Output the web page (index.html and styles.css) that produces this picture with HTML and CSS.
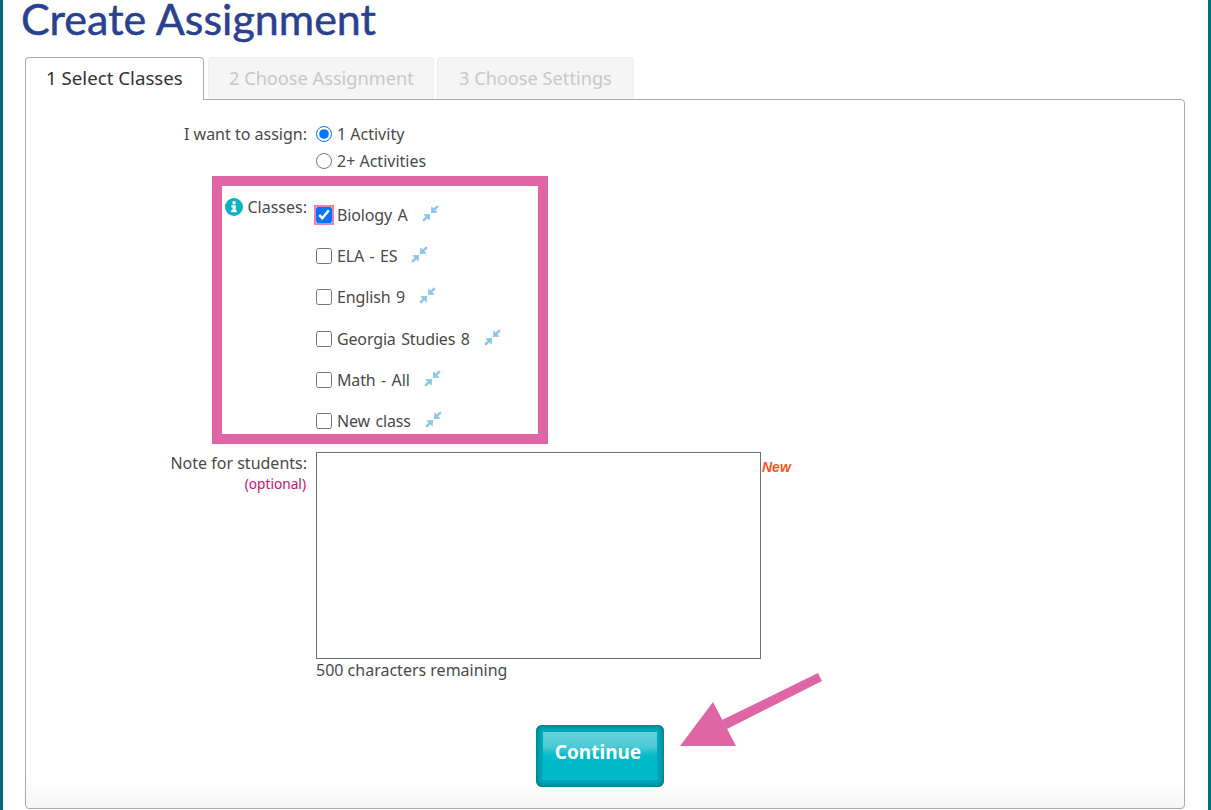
FILE: index.html
```html
<!DOCTYPE html>
<html lang="en">
<head>
    <meta charset="UTF-8">
    <meta name="viewport" content="width=device-width, initial-scale=1.0">
    <title>Create Assignment</title>
    <link rel="stylesheet" href="styles.css">
</head>
<body>
    <svg class="icon-defs" width="0" height="0" aria-hidden="true">
        <symbol id="collapse" viewBox="0 0 16 16">
            <path d="M8.4 7.6 8.8 1.2 11 3.4 14.2 0.2 15.8 1.8 12.6 5 14.8 7.2Z"/>
            <path d="M7.6 8.4 7.2 14.8 5 12.6 1.8 15.8 0.2 14.2 3.4 11 1.2 8.8Z"/>
        </symbol>
    </svg>

    <main class="page">
        <h1 class="page-title">Create Assignment</h1>

        <div class="tabs">
            <div class="tab active">1 Select Classes</div>
            <div class="tab tab-two">2 Choose Assignment</div>
            <div class="tab tab-three">3 Choose Settings</div>
        </div>

        <form class="panel">
            <div class="row row-assign">
                <div class="row-label">I want to assign:</div>
                <div class="row-field">
                    <label class="option"><input type="radio" name="assign" checked> 1 Activity</label>
                    <label class="option"><input type="radio" name="assign"> 2+ Activities</label>
                </div>
            </div>

            <div class="row row-classes">
                <div class="row-label">
                    <svg class="info-icon" viewBox="0 0 18 18" aria-hidden="true">
                        <circle cx="9" cy="9" r="9" fill="#0fb1c5"/>
                        <rect x="7.4" y="3.2" width="3.2" height="3" rx="1" fill="#fff"/>
                        <rect x="6.4" y="7.4" width="4.2" height="2" fill="#fff"/>
                        <rect x="7.6" y="7.4" width="3" height="6.4" fill="#fff"/>
                        <rect x="6.2" y="12.2" width="5.6" height="2" fill="#fff"/>
                    </svg>
                    Classes:
                </div>
                <div class="row-field class-list">
                    <label class="class-item"><input class="focused" type="checkbox" checked> Biology A <svg class="collapse-icon"><use href="#collapse"/></svg></label>
                    <label class="class-item"><input type="checkbox"> ELA - ES <svg class="collapse-icon"><use href="#collapse"/></svg></label>
                    <label class="class-item"><input type="checkbox"> English 9 <svg class="collapse-icon"><use href="#collapse"/></svg></label>
                    <label class="class-item"><input type="checkbox"> Georgia Studies 8 <svg class="collapse-icon"><use href="#collapse"/></svg></label>
                    <label class="class-item"><input type="checkbox"> Math - All <svg class="collapse-icon"><use href="#collapse"/></svg></label>
                    <label class="class-item"><input type="checkbox"> New class <svg class="collapse-icon"><use href="#collapse"/></svg></label>
                </div>
                <div class="highlight"></div>
            </div>

            <div class="row row-note">
                <div class="row-label">
                    Note for students:
                    <div class="optional">(optional)</div>
                </div>
                <div class="row-field">
                    <div class="note-wrap">
                        <textarea class="note"></textarea>
                        <span class="new-flag">New</span>
                    </div>
                    <div class="remaining">500 characters remaining</div>
                </div>
            </div>

            <div class="actions">
                <button type="button" class="continue-button"><span>Continue</span></button>
                <svg class="arrow" viewBox="0 0 150 80" aria-hidden="true">
                    <path d="M5 76 38 32 61 76Z" fill="#e065a5"/>
                    <path d="M47 50 143 3 147 11 52 59Z" fill="#e065a5"/>
                </svg>
            </div>
        </form>
    </main>
</body>
</html>
```

FILE: styles.css
```css
* { box-sizing: border-box; }
html, body { margin: 0; height: 810px; overflow: hidden; background-color: #fff; }
body { font-family: "Noto Sans", Arial, sans-serif; font-size: 16px; color: #4a4a4a; }
.icon-defs { position: absolute; }
.page { height: 810px; padding: 0 23px 0 22px; border-left: 3px solid #006c75; border-right: 3px solid #006c75; }
.page-title { margin: 0 0 0 -4px; height: 57px; font-family: Lato, sans-serif; font-size: 43px; line-height: 38px; font-weight: 400; color: #2a4190; -webkit-text-stroke: 0.5px #2a4190; }

.tabs { display: flex; height: 43px; position: relative; z-index: 1; }
.tab { height: 42px; padding: 0 20px; margin-right: 4px; line-height: 40px; font-size: 18.2px; color: #c8c8c8; background-color: #f5f5f5; border: 1px solid #eee; border-bottom: none; border-radius: 4px 4px 0 0; white-space: nowrap; }
.tab.active { width: 179px; height: 43px; font-size: 18.7px; color: #333; background-color: #fff; border-color: #aaa; }
.tab-two { width: 226px; margin-right: 3px; }
.tab-three { width: 197px; padding-left: 21px; }

.panel { height: 710px; margin-top: -1px; border: 1px solid #aaa; border-radius: 0 4px 4px 4px; background: linear-gradient(#fff 680px, #f6f6f6); }
.row { display: flex; }
.row-label { width: 290px; flex-shrink: 0; padding-right: 9px; text-align: right; }
.row-field { flex: 1; }
.row-assign { padding-top: 20px; }
.row-assign .row-label { padding-top: 3px; }
.option { display: flex; align-items: center; gap: 5px; height: 27px; }
.option input { width: 16px; height: 16px; margin: 0; }

.row-classes { position: relative; padding-top: 20px; }
.row-classes .row-label { padding-top: 2px; line-height: 22px; }
.info-icon { width: 18px; height: 18px; vertical-align: -3px; margin-right: 0; }
.class-item { display: flex; align-items: center; gap: 5px; height: 41.3px; word-spacing: 1.5px; letter-spacing: -0.15px; }
.class-item input { width: 16px; height: 16px; margin: 0; }
.class-item input.focused { outline: 2px solid #f27fb4; outline-offset: 0; border-radius: 3px; }
.collapse-icon { width: 17px; height: 17px; margin: -3px 0 0 9px; fill: #8dc8e8; }
.highlight { position: absolute; left: 186px; top: 2px; width: 336px; height: 268px; border: 10px solid #e065a5; pointer-events: none; }

.row-note { padding-top: 10px; }
.row-note .row-label { line-height: 22px; }
.optional { margin-right: 1px; font-size: 13.7px; line-height: 20px; color: #cc0e74; }
.note-wrap { display: flex; }
.note { display: block; width: 445px; height: 207px; padding: 4px; border: 1px solid #707070; border-radius: 0; resize: none; background-color: #fff; }
.new-flag { margin: 7px 0 0 1px; font-family: "Liberation Sans", Arial, sans-serif; font-size: 14px; font-weight: bold; font-style: italic; color: #f7541f; }
.remaining { line-height: 22px; }

.actions { position: relative; display: flex; justify-content: center; padding: 44px 10px 0 0; }
.continue-button { width: 128px; height: 62px; padding: 7px; border: none; border-radius: 6px; background-color: #00a9ba; box-shadow: inset 0 0 5px 1px #006f7c; cursor: pointer; }
.continue-button span { display: block; height: 100%; padding-right: 4px; font-family: "Noto Sans", Arial, sans-serif; font-size: 19px; line-height: 41px; font-weight: bold; color: #fff; background: linear-gradient(#66d1db 0, #4ccbd6 30%, #00b9c9 50%, #00b9c9 100%); }
.arrow { position: absolute; left: 649px; top: -11px; width: 150px; height: 80px; }
```
